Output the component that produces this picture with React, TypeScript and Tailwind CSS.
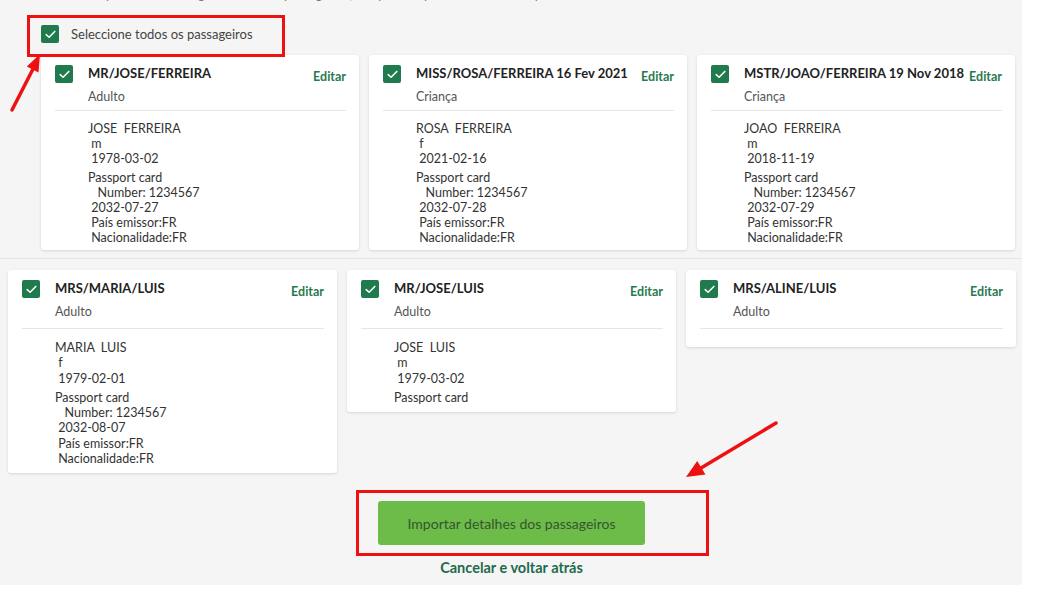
import React from "react";

type Passenger = {
  title: string;
  kind: string;
  details?: string[][];
};

const ROW_ONE: Passenger[] = [
  {
    title: "MR/JOSE/FERREIRA",
    kind: "Adulto",
    details: [
      ["JOSE  FERREIRA", " m", " 1978-03-02"],
      ["Passport card", "   Number: 1234567", " 2032-07-27", " País emissor:FR", " Nacionalidade:FR"],
    ],
  },
  {
    title: "MISS/ROSA/FERREIRA 16 Fev 2021",
    kind: "Criança",
    details: [
      ["ROSA  FERREIRA", " f", " 2021-02-16"],
      ["Passport card", "   Number: 1234567", " 2032-07-28", " País emissor:FR", " Nacionalidade:FR"],
    ],
  },
  {
    title: "MSTR/JOAO/FERREIRA 19 Nov 2018",
    kind: "Criança",
    details: [
      ["JOAO  FERREIRA", " m", " 2018-11-19"],
      ["Passport card", "   Number: 1234567", " 2032-07-29", " País emissor:FR", " Nacionalidade:FR"],
    ],
  },
];

const ROW_TWO: Passenger[] = [
  {
    title: "MRS/MARIA/LUIS",
    kind: "Adulto",
    details: [
      ["MARIA  LUIS", " f", " 1979-02-01"],
      ["Passport card", "   Number: 1234567", " 2032-08-07", " País emissor:FR", " Nacionalidade:FR"],
    ],
  },
  {
    title: "MR/JOSE/LUIS",
    kind: "Adulto",
    details: [["JOSE  LUIS", " m", " 1979-03-02"], ["Passport card"]],
  },
  { title: "MRS/ALINE/LUIS", kind: "Adulto" },
];

function CheckBox() {
  return (
    <span className="flex h-[18px] w-[18px] shrink-0 items-center justify-center rounded-[2px] bg-[#1f7a4d]">
      <svg width="11" height="9" viewBox="0 0 11 9" fill="none">
        <path d="M1.2 4.6 L4.1 7.3 L9.8 1.4" stroke="white" strokeWidth="1.5" strokeLinecap="round" strokeLinejoin="round" />
      </svg>
    </span>
  );
}

function PassengerCard({ p, width, loose }: { p: Passenger; width: string; loose?: boolean }) {
  return (
    <div className={`${width} shrink-0 self-start rounded-[3px] bg-white pl-[14px] pr-[13px] pt-[10px] shadow-[0_1px_3px_rgba(0,0,0,0.12)]`}>
      <div className="flex items-start">
        <CheckBox />
        <div className="ml-[15px] flex-1">
          <div className="flex items-start justify-between">
            <span className="text-[13px] font-bold leading-[16px] text-[#222]">{p.title}</span>
            <span className="mt-[5px] text-[12.5px] font-bold leading-[14px] text-[#2a7a50]">Editar</span>
          </div>
          <div className="mt-[5px] text-[12.5px] leading-[15px] text-[#555]">{p.kind}</div>
        </div>
      </div>
      <div className={`${loose ? "mt-[9px]" : "mt-[6px]"} h-px bg-[#e6e6e6]`} />
      {p.details ? (
        <div
          className={`pl-[33px] text-[12.5px] text-[#333] ${
            loose ? "pb-[7px] pt-[11px] leading-[15.3px]" : "pb-[5px] pt-[10px] leading-[15px]"
          }`}
        >
          {p.details.map((block, i) => (
            <div key={i} className={i > 0 ? "mt-[4px]" : ""}>
              {block.map((line) => (
                <div key={line} className="whitespace-pre">
                  {line}
                </div>
              ))}
            </div>
          ))}
        </div>
      ) : (
        <div className="h-[18px]" />
      )}
    </div>
  );
}

export default function App() {
  return (
    <div className="relative h-[592px] w-[1037px] overflow-hidden bg-white font-['Lato','Open_Sans',sans-serif]">
      <div className="flex h-[585px] w-[1022px] flex-col bg-[#f5f5f5]">
        {/* top section */}
        <div className="border-b border-[#e4e4e4] pb-[8px]">
          <div className="-mt-[13px] h-[15px] whitespace-pre pl-[60px] text-[13px] leading-[15px] text-[#777]">
            Pode importar os dados guardados dos passageiros, se aplicável para esta reserva aqui.
          </div>
          <div className="mt-[23px] flex items-center pl-[41px]">
            <CheckBox />
            <span className="ml-[12px] text-[13px] leading-[18px] text-[#444]">Seleccione todos os passageiros</span>
          </div>
          <div className="mt-[12px] flex gap-[10px] pl-[41px]">
            {ROW_ONE.map((p) => (
              <PassengerCard key={p.title} p={p} width="w-[318px]" />
            ))}
          </div>
        </div>

        <div className="mt-[11px] flex items-start gap-[10px] pl-[8px]">
          {ROW_TWO.map((p, i) => (
            <PassengerCard key={p.title} p={p} loose width={i === 2 ? "w-[330px]" : "w-[329px]"} />
          ))}
        </div>

        <div className="mt-[28px] flex flex-col items-center pl-[1px]">
          <button className="flex h-[44px] w-[267px] items-center justify-center rounded-[3px] bg-[#6dbc49] text-[14px] text-[#35542f]">
            Importar detalhes dos passageiros
          </button>
          <span className="mt-[13px] text-[14.5px] font-bold leading-[20px] text-[#1d6b4c]">Cancelar e voltar atrás</span>
        </div>
      </div>

      {/* annotations */}
      <div className="absolute left-[27px] top-[15px] h-[42px] w-[258px] border-[3px] border-[#ee1111]" />
      <div className="absolute left-[356px] top-[490px] h-[66px] w-[353px] border-[3px] border-[#ee1111]" />
      <svg className="pointer-events-none absolute left-0 top-0" width="1037" height="592" viewBox="0 0 1037 592">
        <line x1="12" y1="110" x2="33" y2="69" stroke="#ee1111" strokeWidth="3.5" strokeLinecap="round" />
        <polygon points="40,54 38.5,72.5 26.8,66.5" fill="#ee1111" />
        <line x1="776" y1="423" x2="701" y2="468" stroke="#ee1111" strokeWidth="3.5" strokeLinecap="round" />
        <polygon points="686,477 705.5,474.5 697.2,461" fill="#ee1111" />
      </svg>
    </div>
  );
}
